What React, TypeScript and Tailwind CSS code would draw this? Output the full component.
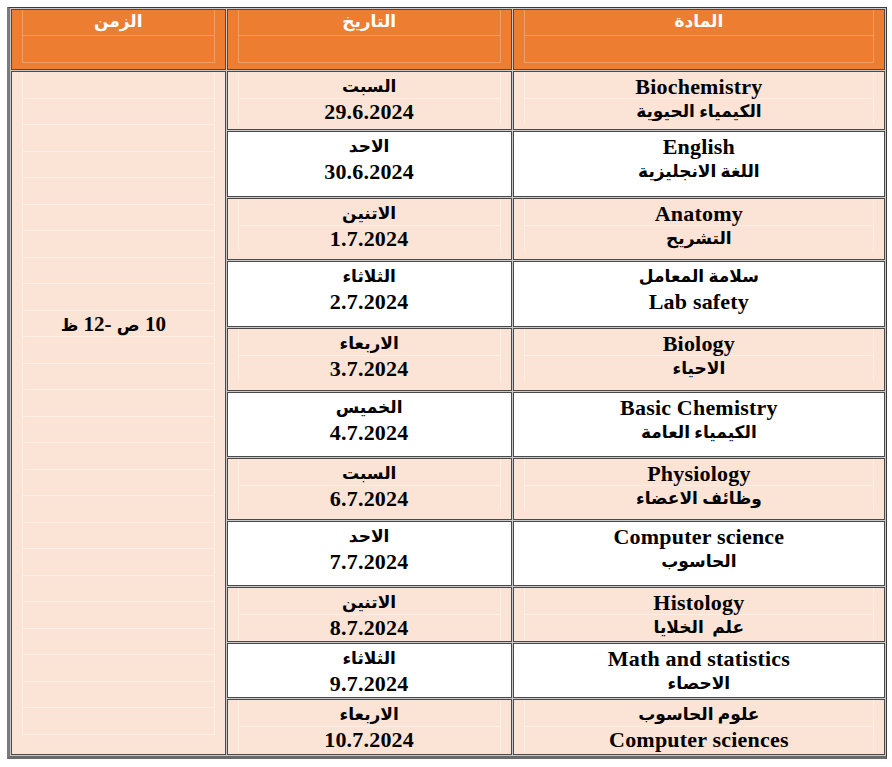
const rows = [
  { subject: ['Biochemistry', 'الكيمياء الحيوية'], day: 'السبت', date: '29.6.2024', h: 'h-[59px]', pink: true },
  { subject: ['English', 'اللغة الانجليزية'], day: 'الاحد', date: '30.6.2024', h: 'h-[66px]', pink: false },
  { subject: ['Anatomy', 'التشريح'], day: 'الاتنين', date: '1.7.2024', h: 'h-[62px]', pink: true },
  { subject: ['سلامة المعامل', 'Lab safety'], day: 'الثلاثاء', date: '2.7.2024', h: 'h-[66px]', pink: false },
  { subject: ['Biology', 'الاحياء'], day: 'الاربعاء', date: '3.7.2024', h: 'h-[63px]', pink: true },
  { subject: ['Basic Chemistry', 'الكيمياء العامة'], day: 'الخميس', date: '4.7.2024', h: 'h-[65px]', pink: false },
  { subject: ['Physiology', 'وظائف الاعضاء'], day: 'السبت', date: '6.7.2024', h: 'h-[62px]', pink: true },
  { subject: ['Computer science', 'الحاسوب'], day: 'الاحد', date: '7.7.2024', h: 'h-[65px]', pink: false },
  { subject: ['Histology', 'علم  الخلايا'], day: 'الاتنين', date: '8.7.2024', h: 'h-[55px]', pink: true },
  { subject: ['Math and statistics', 'الاحصاء'], day: 'الثلاثاء', date: '9.7.2024', h: 'h-[55px]', pink: false },
  { subject: ['علوم الحاسوب', 'Computer sciences'], day: 'الاربعاء', date: '10.7.2024', h: 'h-[56px]', pink: true },
];

const cell = 'border border-[#4a4a4a] p-0 align-top';

const isArabic = (s: string) => /[\u0600-\u06FF]/.test(s);

const Lines = ({ lines }: { lines: string[] }) => (
  <div className="mx-[10px] pt-[2px] border-x border-white/40">
    {lines.map((line, i) => (
      <div
        key={i}
        className={`h-[25px] leading-[25px] whitespace-pre ${
          isArabic(line) ? 'text-[17px]' : 'text-[22px] tracking-[0.2px]'
        } ${i === 0 ? 'border-b border-white/40' : ''}`}
      >
        {line}
      </div>
    ))}
  </div>
);

const HeaderCell = ({ label, width }: { label: string; width: string }) => (
  <th className={`${cell} ${width} bg-[#ed7d31] text-white font-bold`}>
    <div className="mx-[10px] border-x border-white/25">
      <div className="h-[26px] leading-[24px] border-b border-white/25 text-[17px]">{label}</div>
      <div className="h-[27px] border-b border-white/25" />
    </div>
  </th>
);

export default function App() {
  return (
    <div className="bg-white min-h-[767px] pt-[7px] pl-[7px] font-['Liberation_Serif','DejaVu_Sans',serif] text-black">
      <table
        dir="rtl"
        className="w-[880px] border-separate border-spacing-[1px] bg-[#c8c8c8] border-t border-r border-l-[3px] border-b-[3px] border-t-[#3a3a3a] border-r-[#3a3a3a] border-l-[#7a7a7a] border-b-[#6a6a6a] text-center"
      >
        <thead>
          <tr className="h-[61px]">
            <HeaderCell label="المادة" width="w-[374px]" />
            <HeaderCell label="التاريخ" width="w-[287px]" />
            <HeaderCell label="الزمن" width="w-[216px]" />
          </tr>
        </thead>
        <tbody className="font-bold">
          {rows.map((row, i) => {
            const bg = row.pink ? 'bg-[#fbe4d5]' : 'bg-white';
            return (
              <tr key={row.date} className={row.h}>
                <td className={`${cell} ${bg}`}>
                  <Lines lines={row.subject} />
                </td>
                <td className={`${cell} ${bg}`}>
                  <Lines lines={[row.day, row.date]} />
                </td>
                {i === 0 && (
                  <td rowSpan={rows.length} className={`${cell} bg-[#fbe4d5]`}>
                    <div className="mx-[10px] border-x border-white/40">
                      {Array.from({ length: 25 }, (_, k) => (
                        <div key={k} className="h-[26.5px] leading-[26px] border-b border-white/40 text-[21px]">
                          {k === 9 ? (
                            <span className="pr-[10px]">
                              10 <span className="text-[17px]">ص</span> -12 <span className="text-[17px]">ظ</span>
                            </span>
                          ) : (
                            ''
                          )}
                        </div>
                      ))}
                    </div>
                  </td>
                )}
              </tr>
            );
          })}
        </tbody>
      </table>
    </div>
  );
}
